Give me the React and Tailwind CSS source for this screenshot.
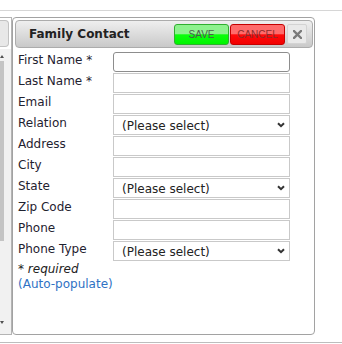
import React from 'react';

const fields = [
    ['First Name *', 'input'],
    ['Last Name *', 'input'],
    ['Email', 'input'],
    ['Relation', 'select'],
    ['Address', 'input'],
    ['City', 'input'],
    ['State', 'select'],
    ['Zip Code', 'input'],
    ['Phone', 'input'],
    ['Phone Type', 'select'],
];

const Chevron = () => (
    <svg className="absolute right-[5px] top-[7px] pointer-events-none" width="8" height="6" viewBox="0 0 8 6">
        <path d="M1 1.2 L4 4.2 L7 1.2" fill="none" stroke="#333" strokeWidth="2" />
    </svg>
);

const App = () => {
    return (
        <div className="w-[342px] h-[344px] bg-white overflow-hidden font-['DejaVu_Sans',sans-serif] text-[#222]">
            <div className="h-[10px]" />
            <div className="border-t border-[#d6d6d6]" />

            <div className="flex mt-[6px] h-[318px]">
                {/* left pane, mostly hidden */}
                <div className="w-[12px] flex flex-col border-t border-b border-r border-[#b4b4b4]">
                    <div className="mt-[2px] w-[9px] h-[27px] bg-[#e8e8e8] border border-l-0 border-[#c2c2c2] rounded-r-[4px]" />
                    <div className="mt-[2px] flex-1 bg-[#f1f1f1] flex flex-col">
                        <div className="mt-[6px] w-0 h-0 border-l-[2px] border-r-[2px] border-b-[3px] border-l-transparent border-r-transparent border-b-[#505050]" />
                        <div className="mt-[3px] w-[4px] h-[180px] bg-[#c4c4c4]" />
                        <div className="flex-1" />
                        <div className="mb-[10px] w-0 h-0 border-l-[2px] border-r-[2px] border-t-[3px] border-l-transparent border-r-transparent border-t-[#505050]" />
                    </div>
                </div>

                {/* dialog */}
                <div className="w-[303px] border border-[#a2a2a2] rounded-[4px] pt-[2px] pl-[2px] pr-[1px]">
                    <div className="h-[28px] border border-[#acacac] rounded-[4px] bg-linear-to-b from-[#efefef] to-[#c9c9c9] flex items-center pl-[13px] pr-[5px]">
                        <span className="font-bold text-[12px] text-[#222] flex-1">Family Contact</span>
                        <div className="flex items-center gap-[1px] font-['Liberation_Sans',Arial,sans-serif] text-[10px]">
                            <button className="w-[55px] h-[21px] rounded-[3px] border border-[#2fae2f] bg-[linear-gradient(#8ef28e_0%,#8ef28e_45%,#0bff0b_52%,#00f500_100%)] text-[#4d5a4d]">
                                SAVE
                            </button>
                            <button className="w-[55px] h-[21px] rounded-[3px] border border-[#c40000] bg-[linear-gradient(#ff6b6b_0%,#ff6b6b_45%,#ff0a0a_52%,#f20000_100%)] text-[#8e2c2c]">
                                CANCEL
                            </button>
                            <button className="ml-[1px] w-[20px] h-[20px] rounded-[2px] border border-[#d3d3d3] bg-[#e9e9e9] flex items-center justify-center">
                                <svg width="9" height="9" viewBox="0 0 9 9">
                                    <path d="M1 1 L8 8 M8 1 L1 8" stroke="#7a7a7a" strokeWidth="2.4" strokeLinecap="square" />
                                </svg>
                            </button>
                        </div>
                    </div>

                    <div className="mt-[4px] pl-[3px] text-[12px]">
                        {fields.map(([label, type], i) => (
                            <div key={label} className="flex h-[20px] mb-[1px]">
                                <label className="w-[95px] leading-[15px] pt-[1px] text-[#1f2230]">{label}</label>
                                {type === 'input' ? (
                                    <input
                                        type="text"
                                        className={`w-[177px] h-[20px] bg-white outline-none border ${i === 0 ? 'border-[#8d8d8d] rounded-[3px]' : 'border-[#c9c9c9]'}`}
                                    />
                                ) : (
                                    <div className="relative w-[177px] h-[20px]">
                                        <select className="appearance-none w-full h-full bg-white border border-[#c9c9c9] pl-[8px] pt-[1px] text-[12px] leading-[18px] text-[#222] outline-none">
                                            <option>(Please select)</option>
                                        </select>
                                        <Chevron />
                                    </div>
                                )}
                            </div>
                        ))}
                        <div className="leading-[15px] italic text-[#222]">* required</div>
                        <div className="leading-[15px]">
                            <a href="#" className="text-[#2f72c4]">(Auto-populate)</a>
                        </div>
                    </div>
                </div>
            </div>

            <div className="mt-[7px] border-t border-[#bdbdbd]" />
        </div>
    );
};

export default App;
